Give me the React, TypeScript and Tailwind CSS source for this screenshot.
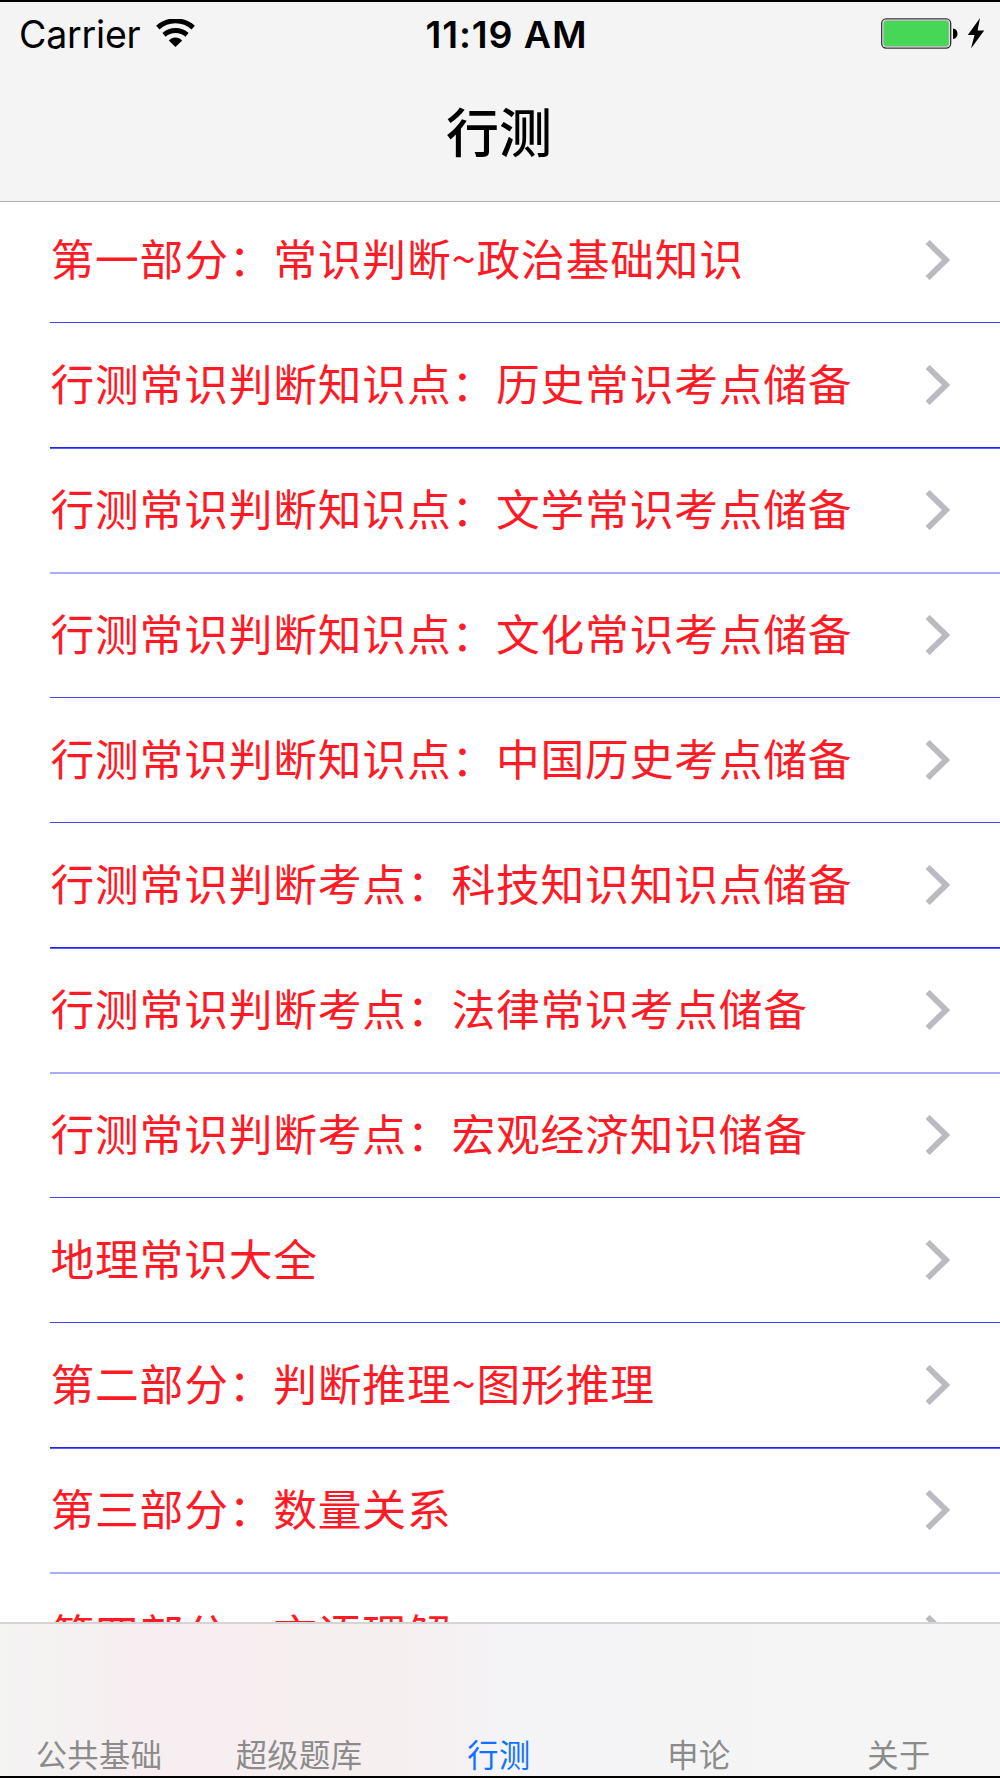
import React from 'react';

interface Topic {
  title: string;
  line: string;
}

const THIN = 'h-px mb-px bg-[#4048ff]';
const THICK = 'h-0.5 bg-[linear-gradient(#2323ee_1px,#5c5cff_1px)]';
const SOFT = 'h-0.5 bg-[#aaaaff]';

const topics: Topic[] = [
  { title: '第一部分：常识判断~政治基础知识', line: THIN },
  { title: '行测常识判断知识点：历史常识考点储备', line: THICK },
  { title: '行测常识判断知识点：文学常识考点储备', line: SOFT },
  { title: '行测常识判断知识点：文化常识考点储备', line: THIN },
  { title: '行测常识判断知识点：中国历史考点储备', line: THIN },
  { title: '行测常识判断考点：科技知识知识点储备', line: THICK },
  { title: '行测常识判断考点：法律常识考点储备', line: SOFT },
  { title: '行测常识判断考点：宏观经济知识储备', line: THIN },
  { title: '地理常识大全', line: THIN },
  { title: '第二部分：判断推理~图形推理', line: THICK },
  { title: '第三部分：数量关系', line: SOFT },
  { title: '第四部分：言语理解', line: THIN },
];

const tabs = ['公共基础', '超级题库', '行测', '申论', '关于'];

const WifiIcon: React.FC = () => (
  <svg className="ml-[15px] h-[29px] w-[39px]" viewBox="0 0 39 29" fill="none">
    <path d="M1.8 8.6 C11.8 -0.4 27.2 -0.4 37.2 8.6" stroke="#000" strokeWidth="5" />
    <path d="M8 15.8 C14.6 10.2 24.4 10.2 31 15.8" stroke="#000" strokeWidth="5" />
    <path d="M12.8 21.6 C16.6 17.6 22.4 17.6 26.2 21.6 L19.5 28 Z" fill="#000" />
  </svg>
);

const BatteryIcon: React.FC = () => (
  <svg className="h-[31px] w-[104px]" viewBox="0 0 104 31">
    <rect x="0.7" y="0.9" width="69" height="29.2" rx="4.5" fill="#f4f4f4" stroke="#333" strokeWidth="1.3" />
    <rect x="2.4" y="2.5" width="65.6" height="26" rx="3" fill="#45d755" stroke="#b9b9b9" strokeWidth="0.9" />
    <path d="M72 10.5 C78 11 78 20.5 72 21 Z" fill="#000" />
    <path d="M99 0 L86.8 17 H93.5 L90 30.5 L103.2 12.5 H96.6 Z" fill="#000" />
  </svg>
);

const Chevron: React.FC = () => (
  <svg className="mb-[2px] h-[40px] w-[25px]" viewBox="0 0 25 40" fill="none">
    <path d="M2.6 2 L21 20 L2.6 38" stroke="#bbbac1" strokeWidth="5.8" />
  </svg>
);

const TopicRow: React.FC<{ topic: Topic }> = ({ topic }) => (
  <li className="flex h-[125px] shrink-0 flex-col pl-[50px]">
    <div className="flex flex-1 items-center justify-between pr-[50px]">
      <span className="mb-[8px] whitespace-nowrap pl-[0.5px] text-[43.75px] leading-[60px] tracking-[0.8px] text-[#ff1a26]">
        {topic.title}
      </span>
      <Chevron />
    </div>
    <div className={`shrink-0 ${topic.line}`} />
  </li>
);

export default function App() {
  return (
    <div className="flex h-[1778px] w-[1000px] flex-col overflow-hidden border-y-2 border-black bg-white font-['Noto_Sans_CJK_SC',sans-serif]">
      <header className="flex h-[200px] shrink-0 flex-col border-b border-[#b2b2b2] bg-[#f4f4f5]">
        <div className="grid h-[63px] grid-cols-3 items-center font-['Inter',sans-serif] text-[37.5px] text-black">
          <div className="flex items-center pl-[19px]">
            <span className="pt-[3px] tracking-[-0.2px]">Carrier</span>
            <WifiIcon />
          </div>
          <span className="pl-[13px] pt-[3px] text-center font-semibold tracking-[0.9px]">11:19 AM</span>
          <div className="flex justify-end pr-[15px]">
            <BatteryIcon />
          </div>
        </div>
        <h1 className="flex flex-1 items-center justify-center pb-[5px] pr-[2px] text-[53px] font-medium text-black">行测</h1>
      </header>

      <ul className="-mt-[3px] flex min-h-0 flex-1 flex-col overflow-hidden">
        {topics.map((topic) => (
          <TopicRow key={topic.title} topic={topic} />
        ))}
      </ul>

      <nav className="grid h-[154px] shrink-0 grid-cols-5 items-end border-t-2 border-[#d4d4d4] bg-[linear-gradient(90deg,#f4f4f3_0%,#f6eef0_14%,#f6eff0_40%,#f4f4f6_52%,#f5f5f5_100%)]">
        {tabs.map((tab) => (
          <span
            key={tab}
            className={`pr-[2px] text-center text-[31.25px] leading-[44px] tracking-[0.4px] ${tab === '行测' ? 'text-[#1272ff]' : 'text-[#8b8b8b]'}`}
          >
            {tab}
          </span>
        ))}
      </nav>
    </div>
  );
}
